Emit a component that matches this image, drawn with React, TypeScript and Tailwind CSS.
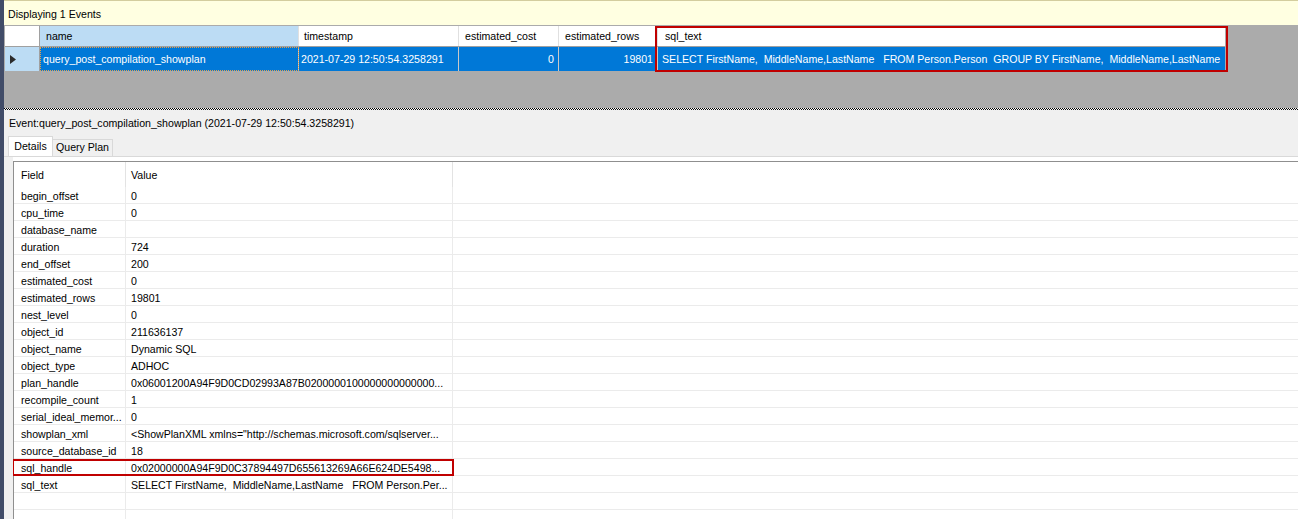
const fields: [string, string][] = [
  ["begin_offset", "0"],
  ["cpu_time", "0"],
  ["database_name", ""],
  ["duration", "724"],
  ["end_offset", "200"],
  ["estimated_cost", "0"],
  ["estimated_rows", "19801"],
  ["nest_level", "0"],
  ["object_id", "211636137"],
  ["object_name", "Dynamic SQL"],
  ["object_type", "ADHOC"],
  ["plan_handle", "0x06001200A94F9D0CD02993A87B0200000100000000000000..."],
  ["recompile_count", "1"],
  ["serial_ideal_memor...", "0"],
  ["showplan_xml", '<ShowPlanXML xmlns="http://schemas.microsoft.com/sqlserver...'],
  ["source_database_id", "18"],
  ["sql_handle", "0x02000000A94F9D0C37894497D655613269A66E624DE5498..."],
  ["sql_text", "SELECT FirstName,  MiddleName,LastName   FROM Person.Per..."],
  ["", ""],
  ["", ""],
];

const sqlText =
  "SELECT FirstName,  MiddleName,LastName   FROM Person.Person  GROUP BY FirstName,  MiddleName,LastName";

export default function App() {
  return (
    <div className="w-[1298px] h-[519px] overflow-hidden flex bg-[#f0f0f0] text-black text-[10.6px] font-['Liberation_Sans',Arial,sans-serif]">
      {/* left window edge */}
      <div className="w-[4px] shrink-0 bg-[#414c68]" />

      <div className="flex-1 min-w-0 flex flex-col">
        {/* info bar */}
        <div className="h-[25px] shrink-0 flex items-center pl-[4px] pt-[4px] bg-[#ffffe1] border-t border-[#d3cd9e]">
          Displaying 1 Events
        </div>

        {/* events grid */}
        <div className="h-[83px] shrink-0 bg-[#ababab] pt-[1px] pl-[1px] relative">
          <div className="flex h-[21px] border-b border-[#a0a0a0] w-max">
            <div className="w-[35px] bg-white border-r border-[#a0a0a0]" />
            <div className="w-[259px] bg-[#bcdcf4] border-r border-[#e0e0e0] pl-[6px] pt-[2px] flex items-center">name</div>
            <div className="w-[160px] bg-white border-r border-[#e0e0e0] pl-[5px] pt-[2px] flex items-center">timestamp</div>
            <div className="w-[100px] bg-white border-r border-[#e0e0e0] pl-[6px] pt-[2px] flex items-center">estimated_cost</div>
            <div className="w-[99px] bg-white border-r border-[#e0e0e0] pl-[6px] pt-[2px] flex items-center">estimated_rows</div>
            <div className="w-[567px] bg-white pl-[7px] pt-[2px] flex items-center">sql_text</div>
          </div>
          <div className="flex h-[24px] w-max text-white">
            <div className="w-[35px] bg-[#bcdcf4] border-r border-[#a0a0a0] pl-[5px] flex items-center">
              <svg width="6" height="9" viewBox="0 0 6 9">
                <path d="M0 0 L6 4.5 L0 9 Z" fill="#2b2b2b" />
              </svg>
            </div>
            <div className="w-[259px] bg-[#0078d7] border-r border-[#c8c8c8] pl-[3px] pt-[2px] flex items-center outline-1 outline-dotted outline-[#e8a048] -outline-offset-1">
              query_post_compilation_showplan
            </div>
            <div className="w-[160px] bg-[#0078d7] border-r border-[#c8c8c8] pl-[2px] pt-[2px] flex items-center">
              2021-07-29 12:50:54.3258291
            </div>
            <div className="w-[100px] bg-[#0078d7] border-r border-[#c8c8c8] pr-[4px] pt-[2px] flex items-center justify-end">0</div>
            <div className="w-[99px] bg-[#0078d7] border-r border-[#c8c8c8] pr-[4px] pt-[2px] flex items-center justify-end">19801</div>
            <div className="w-[567px] bg-[#0078d7] pl-[4px] pt-[2px] flex items-center whitespace-pre overflow-hidden">{sqlText}</div>
          </div>
          <div className="absolute left-[651px] top-[1px] w-[573px] h-[46px] border-2 border-[#c00000]" />
        </div>

        {/* splitter */}
        <div className="h-[1px] shrink-0 bg-[repeating-linear-gradient(90deg,#000_0px,#000_1px,#fff_1px,#fff_2px)]" />
        <div className="h-[1px] shrink-0 bg-[repeating-linear-gradient(90deg,#fff_0px,#fff_1px,#000_1px,#000_2px)]" />
        <div className="h-[1px] shrink-0 bg-[#f0f0f0]" />

        {/* details panel */}
        <div className="flex-1 min-h-0 flex flex-col">
          <div className="mt-[4px] h-[16px] leading-[16px] pl-[5px]">
            Event:query_post_compilation_showplan (2021-07-29 12:50:54.3258291)
          </div>

          <div className="mt-[5px] h-[20px] pl-[4px] flex items-end">
            <div className="w-[45px] h-[20px] bg-white border border-b-0 border-[#d9d9d9] flex items-center justify-center">
              Details
            </div>
            <div className="w-[60px] h-[17px] bg-[#f0f0f0] border border-l-0 border-b-0 border-[#d9d9d9] flex items-center justify-center">
              Query Plan
            </div>
          </div>

          <div className="flex-1 min-h-0 border-t border-[#d9d9d9]">
            <div className="ml-[9px] h-full bg-white pt-[4px] overflow-hidden">
              <div className="border-l border-t border-[#8f8f8f] h-full">
                <div className="flex h-[25px]">
                  <div className="w-[112px] pl-[7px] pt-[2px] flex items-center border-r border-[#e3e3e3]">Field</div>
                  <div className="w-[327px] pl-[5px] pt-[2px] flex items-center border-r border-[#e3e3e3]">Value</div>
                  <div className="flex-1" />
                </div>
                {fields.map(([f, v], i) => (
                  <div key={i} className="relative flex h-[17px] border-b border-[#ebebeb]">
                    <div className="w-[112px] pl-[7px] pt-[3px] leading-[12px] border-r border-[#ebebeb] whitespace-pre overflow-hidden">
                      {f}
                    </div>
                    <div className="w-[327px] pl-[5px] pt-[3px] leading-[12px] border-r border-[#ebebeb] whitespace-pre overflow-hidden">
                      {v}
                    </div>
                    <div className="flex-1" />
                    {f === "sql_handle" && (
                      <div className="absolute left-[-2px] top-0 w-[442px] h-[17px] border-2 border-[#c00000]" />
                    )}
                  </div>
                ))}
              </div>
            </div>
          </div>
        </div>
      </div>
    </div>
  );
}
